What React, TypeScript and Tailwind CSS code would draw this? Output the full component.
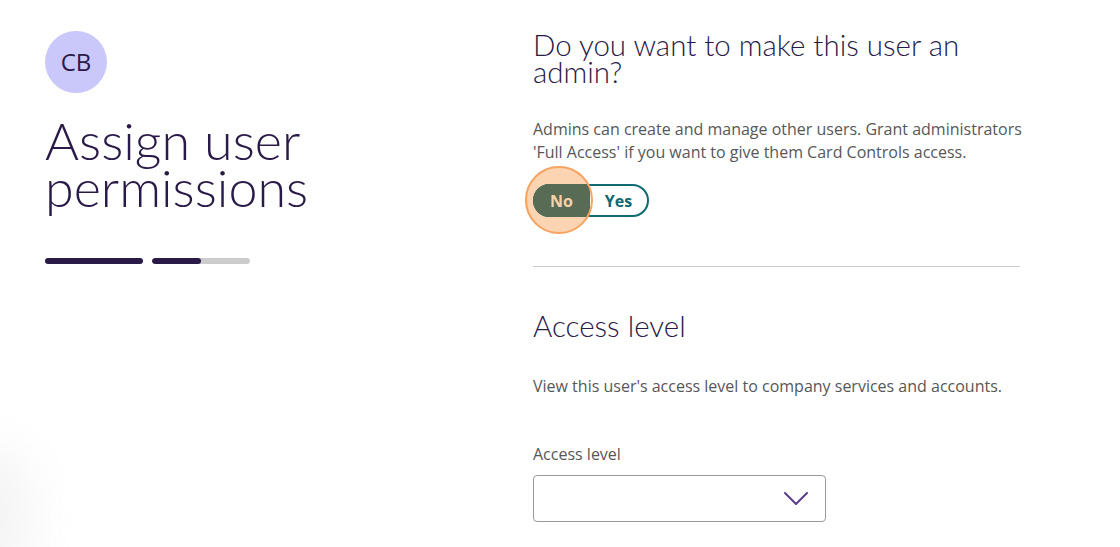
import React from "react";

function ProgressBars() {
  return (
    <div className="mt-[47px] flex gap-[9px]">
      <div className="h-[6px] w-[98px] rounded-full bg-[#2a1a47]" />
      <div className="h-[6px] w-[98px] overflow-hidden rounded-full bg-[#cccccc]">
        <div className="h-full w-[49px] rounded-full bg-[#2a1a47]" />
      </div>
    </div>
  );
}

function AdminToggle() {
  return (
    <div className="relative mt-[20px] h-[33px] w-[116px]">
      {/* focus halo behind the button */}
      <div className="absolute left-[-8px] top-[-18px] h-[68px] w-[68px] rounded-full bg-[#fcd4b2]" />
      <div className="relative flex h-full w-full rounded-full border-2 border-[#0e6b70] bg-white">
        <div className="-my-[2px] -ml-[2px] flex w-[57px] items-center justify-center rounded-l-full bg-[#586b54] text-[16px] font-bold text-[#f6d2aa]">
          No
        </div>
        <div className="flex flex-1 items-center justify-center text-[16px] font-bold text-[#0e6b70]">
          Yes
        </div>
      </div>
      {/* focus ring outline on top */}
      <div className="pointer-events-none absolute left-[-8px] top-[-18px] h-[68px] w-[68px] rounded-full border-2 border-[#f5a463]" />
    </div>
  );
}

export default function App() {
  return (
    <div
      className="relative h-[547px] w-full overflow-hidden bg-white pl-[45px] pt-[31px] text-[#2a1a47]"
      style={{ fontFamily: "'Open Sans', 'Liberation Sans', sans-serif" }}
    >
      <div className="pointer-events-none absolute -left-[60px] bottom-[-40px] h-[140px] w-[90px] rounded-full bg-[#f4f4f4] blur-xl" />
      <div className="relative flex">
        {/* left column */}
        <div className="w-[488px] shrink-0">
          <div className="flex h-[62px] w-[62px] items-center justify-center rounded-full bg-[#cac7fb] text-[24px] text-[#2a1a47]">
            CB
          </div>
          <h1 className="mt-[24px] font-['Lato',sans-serif] text-[52px] font-light leading-[47px] text-[#2a1a47]">
            Assign user
            <br />
            permissions
          </h1>
          <ProgressBars />
        </div>

        {/* right column */}
        <div className="w-[510px]">
          <h2 className="w-[487px] font-['Lato',sans-serif] text-[29.5px] font-light leading-[27px] text-[#2a1a47]">
            Do you want to make this user an admin?
          </h2>
          <p className="mt-[33px] text-[16px] leading-[23px] text-[#575757]">
            Admins can create and manage other users. Grant administrators
            <br />
            'Full Access' if you want to give them Card Controls access.
          </p>
          <AdminToggle />

          <div className="mt-[49px] h-px w-[487px] bg-[#cccccc]" />

          <h2 className="mt-[44px] font-['Lato',sans-serif] text-[29.5px] font-light leading-[30px] text-[#2a1a47]">
            Access level
          </h2>
          <p className="mt-[34px] text-[16px] leading-[23px] text-[#575757]">
            View this user's access level to company services and accounts.
          </p>

          <label className="mt-[45px] block text-[16px] leading-[23px] text-[#575757]">Access level</label>
          <div className="mt-[9px] flex h-[47px] w-[293px] items-center justify-end rounded-[4px] border border-[#9a9a9a] pr-[17px]">
            <svg width="24" height="13" viewBox="0 0 24 13" fill="none">
              <path d="M1 1l11 11L23 1" stroke="#5b3f8c" strokeWidth="2" strokeLinecap="round" strokeLinejoin="round" />
            </svg>
          </div>
        </div>
      </div>
    </div>
  );
}
